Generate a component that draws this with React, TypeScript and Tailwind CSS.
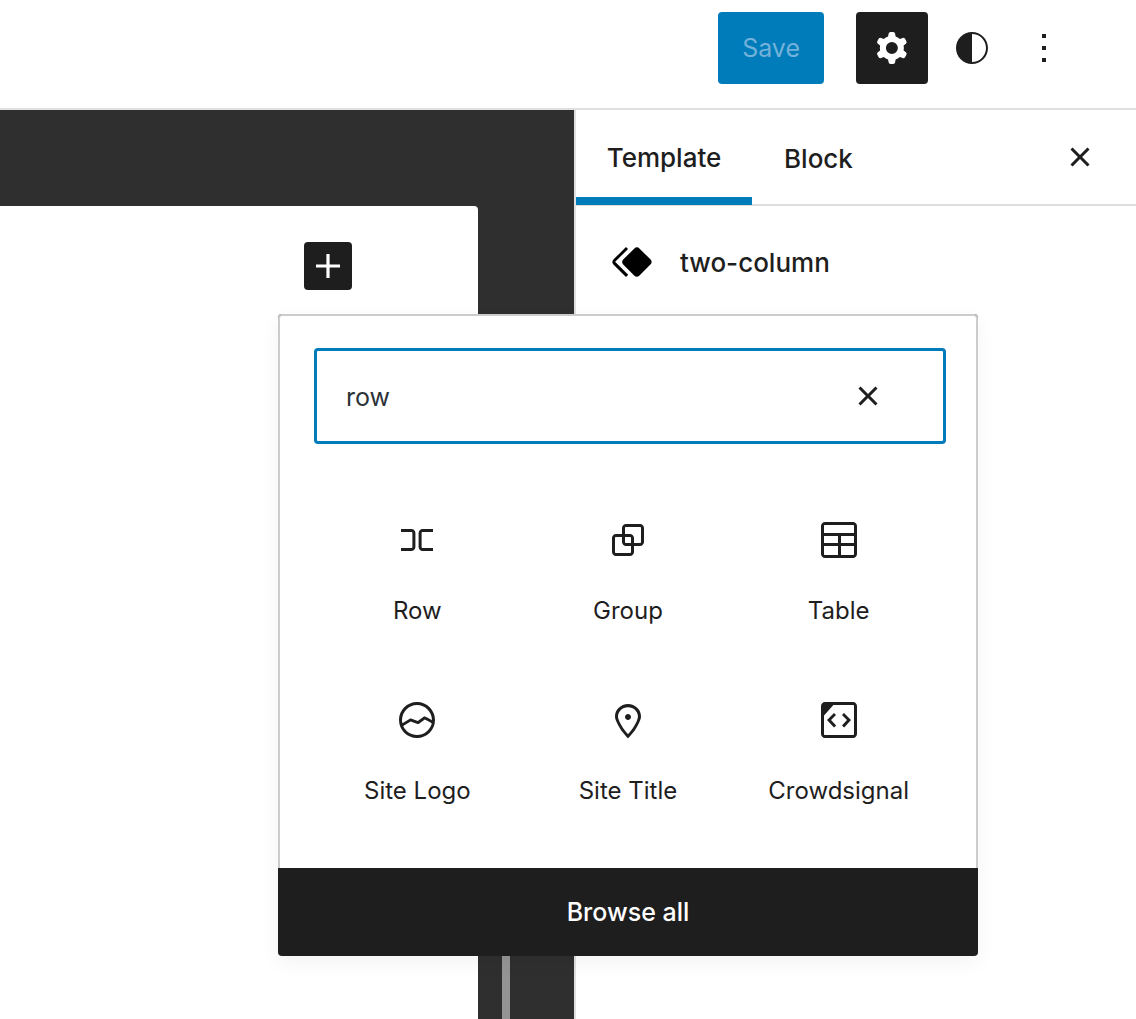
import { useState } from "react";

const icons = {
  cog: "M10.289 4.836A1 1 0 0111.275 4h1.306a1 1 0 01.987.836l.244 1.466c.787.26 1.503.679 2.108 1.218l1.393-.522a1 1 0 011.216.437l.653 1.13a1 1 0 01-.23 1.273l-1.148.944a6.025 6.025 0 010 2.435l1.149.946a1 1 0 01.23 1.272l-.653 1.13a1 1 0 01-1.216.437l-1.394-.522c-.605.54-1.32.958-2.108 1.218l-.244 1.466a1 1 0 01-.987.836h-1.306a1 1 0 01-.986-.836l-.244-1.466a5.995 5.995 0 01-2.108-1.218l-1.394.522a1 1 0 01-1.217-.436l-.653-1.131a1 1 0 01.23-1.272l1.149-.946a6.026 6.026 0 010-2.435l-1.148-.944a1 1 0 01-.23-1.272l.653-1.131a1 1 0 011.217-.437l1.393.522a5.994 5.994 0 012.108-1.218l.244-1.466zM14.929 12a3 3 0 11-6 0 3 3 0 016 0z",
  styles: "M12 4c-4.4 0-8 3.6-8 8s3.6 8 8 8 8-3.6 8-8-3.6-8-8-8zm0 15V5c3.9 0 7 3.1 7 7s-3.1 7-7 7z",
  more: "M13 19h-2v-2h2v2zm0-6h-2v-2h2v2zm0-6h-2V5h2v2z",
  close: "M12 13.06l3.712 3.713 1.061-1.06L13.061 12l3.712-3.712-1.06-1.06L12 10.938 8.288 7.227l-1.061 1.06L10.939 12l-3.712 3.712 1.06 1.061L12 13.061z",
  plus: "M18 11.2h-5.2V6h-1.6v5.2H6v1.6h5.2V18h1.6v-5.2H18z",
  symbol: "M21.3 10.8l-5.6-5.6c-.7-.7-1.8-.7-2.5 0l-5.6 5.6c-.7.7-.7 1.8 0 2.5l5.6 5.6c.3.3.8.5 1.2.5s.9-.2 1.2-.5l5.6-5.6c.8-.7.8-1.9.1-2.5zm-17.6 1L10 5.5l-1-1-6.3 6.3c-.7.7-.7 1.8 0 2.5L9 19.5l1.1-1.1-6.3-6.3c-.2 0-.2-.2-.1-.3z",
  row: "M9.2 6.5H4V8h5.2c.3 0 .5.2.5.5v7c0 .3-.2.5-.5.5H4v1.5h5.2c1.1 0 2-.9 2-2v-7c0-1.1-.8-2-2-2zM14.8 8H20V6.5h-5.2c-1.1 0-2 .9-2 2v7c0 1.1.9 2 2 2H20V16h-5.2c-.3 0-.5-.2-.5-.5v-7c-.1-.3.2-.5.5-.5z",
  group: "M18 4h-7c-1.1 0-2 .9-2 2v3H6c-1.1 0-2 .9-2 2v7c0 1.1.9 2 2 2h7c1.1 0 2-.9 2-2v-3h3c1.1 0 2-.9 2-2V6c0-1.1-.9-2-2-2zm-4.5 14c0 .3-.2.5-.5.5H6c-.3 0-.5-.2-.5-.5v-7c0-.3.2-.5.5-.5h3V13c0 1.1.9 2 2 2h2.5v3zm0-4.5H11c-.3 0-.5-.2-.5-.5v-2.5H13c.3 0 .5.2.5.5v2.5zm5-.5c0 .3-.2.5-.5.5h-3V11c0-1.1-.9-2-2-2h-2.5V6c0-.3.2-.5.5-.5h7c.3 0 .5.2.5.5v7z",
  table: "M19 3H5c-1.1 0-2 .9-2 2v14c0 1.1.9 2 2 2h14c1.1 0 2-.9 2-2V5c0-1.1-.9-2-2-2zM5 4.5h14c.3 0 .5.2.5.5v3.5h-15V5c0-.3.2-.5.5-.5zm8 5.5h6.5v3.5H13V10zm-1.5 3.5h-7V10h7v3.5zm-7 5.5v-4h7v4.5H5c-.3 0-.5-.2-.5-.5zm14.5.5h-6V15h6.5v4c0 .3-.2.5-.5.5z",
  siteLogo: "M12 3c-5 0-9 4-9 9s4 9 9 9 9-4 9-9-4-9-9-9zm0 1.5c4.1 0 7.5 3.4 7.5 7.5v.1c-1.4-.8-3.3-1.7-3.4-1.8-.2-.1-.5-.1-.8.1l-2.9 2.1L9 11.3c-.2-.1-.4 0-.6.1l-3.7 2.2c-.1-.5-.2-1-.2-1.5 0-4.2 3.4-7.6 7.5-7.6zm0 15c-3.1 0-5.8-1.9-6.9-4.5l3.7-2.2 3.5 1.2c.2.1.5 0 .7-.1l2.9-2.1c.8.4 2.5 1.2 3.5 1.9-.9 3.3-3.9 5.8-7.4 5.8z",
  marker: "M12 9c-.8 0-1.5.7-1.5 1.5S11.2 12 12 12s1.5-.7 1.5-1.5S12.8 9 12 9zm0-5c-3.6 0-6.5 2.8-6.5 6.2 0 .8.3 1.8.9 3.1.5 1.1 1.2 2.3 2 3.6.7 1 3 3.8 3.2 3.9l.4.5.4-.5c.2-.2 2.6-2.9 3.2-3.9.8-1.2 1.5-2.5 2-3.6.6-1.3.9-2.3.9-3.1C18.5 6.8 15.6 4 12 4zm4.3 8.7c-.5 1-1.1 2.2-1.9 3.4-.5.7-1.7 2.2-2.4 3-.7-.8-1.9-2.3-2.4-3-.8-1.2-1.4-2.3-1.9-3.3-.6-1.4-.7-2.2-.7-2.5 0-2.6 2.2-4.7 5-4.7s5 2.1 5 4.7c0 .2-.1 1-.7 2.4z",
  embed: "M19 3H5c-1.1 0-2 .9-2 2v14c0 1.1.9 2 2 2h14c1.1 0 2-.9 2-2V5c0-1.1-.9-2-2-2zm.5 16c0 .3-.2.5-.5.5H5c-.3 0-.5-.2-.5-.5V9.8l4.7-5.3H19c.3 0 .5.2.5.5v14zm-6-9.5L16 12l-2.5 2.8 1.1 1L18 12l-3.5-3.5-1 1zm-3 0l-1-1L6 12l3.5 3.8 1.1-1L8 12l2.5-2.5z",
};

function Icon({ name }: { name: keyof typeof icons }) {
  return (
    <svg viewBox="0 0 24 24" className="size-12 shrink-0" fill="currentColor" aria-hidden="true">
      <path fillRule="evenodd" clipRule="evenodd" d={icons[name]} />
    </svg>
  );
}

const blocks: { label: string; icon: keyof typeof icons }[] = [
  { label: "Row", icon: "row" },
  { label: "Group", icon: "group" },
  { label: "Table", icon: "table" },
  { label: "Site Logo", icon: "siteLogo" },
  { label: "Site Title", icon: "marker" },
  { label: "Crowdsignal", icon: "embed" },
];

function Inserter() {
  const [query, setQuery] = useState("row");
  return (
    <div className="absolute top-[72px] -left-[26px] z-10 w-[700px] rounded-sm bg-[#1e1e1e] shadow-[0_6px_20px_rgba(0,0,0,0.05)]">
      <div className="rounded-t-sm border-x-2 border-t-2 border-[#ccc] bg-white pt-8 pb-8">
        <div className="mr-[30px] ml-[34px] flex h-24 items-center rounded border-3 border-[#007cba] pr-[51px] pl-[29px]">
          <input
            type="text"
            aria-label="Search for a block"
            value={query}
            onChange={(e) => setQuery(e.target.value)}
            className="min-w-0 flex-1 pt-0.5 text-[25px] leading-8 text-[#2c3338] outline-none"
          />
          <button type="button" aria-label="Clear search" onClick={() => setQuery("")}>
            <Icon name="close" />
          </button>
        </div>
        <div className="mt-8 grid grid-cols-3 px-8">
          {blocks.map((b) => (
            <button key={b.label} type="button" className="flex h-[180px] flex-col items-center gap-8 pt-10">
              <Icon name={b.icon} />
              <span className="text-[24px] leading-[30px] whitespace-nowrap">{b.label}</span>
            </button>
          ))}
        </div>
      </div>
      <button type="button" className="block h-[88px] w-full rounded-b-sm pt-0.5 text-[25px] font-medium text-white">
        Browse all
      </button>
    </div>
  );
}

export default function App() {
  return (
    <div className="flex min-h-screen flex-col bg-white font-['Inter',sans-serif] text-[#1e1e1e]">
      <header className="flex items-center justify-end border-b-2 border-[#e0e0e0] pt-3 pr-14 pb-6">
        <button type="button" className="mr-8 h-[72px] rounded bg-[#007cba] px-6 pt-0.5 text-[25px] text-[#72b1d9]">
          Save
        </button>
        <button type="button" aria-label="Settings" className="mr-2 flex size-[72px] items-center justify-center rounded bg-[#1e1e1e] text-white">
          <Icon name="cog" />
        </button>
        <button type="button" aria-label="Styles" className="flex size-[72px] items-center justify-center">
          <Icon name="styles" />
        </button>
        <button type="button" aria-label="Options" className="flex size-[72px] items-center justify-center">
          <Icon name="more" />
        </button>
      </header>
      <div className="flex flex-1">
        <main className="flex min-w-0 flex-1 bg-[#2f2f2f] pt-24">
          <div className="flex flex-1 justify-end rounded-tr bg-white pt-9 pr-[126px]">
            <div className="relative size-12">
              <button type="button" aria-label="Add block" className="rounded bg-[#1e1e1e] text-white">
                <Icon name="plus" />
              </button>
              <Inserter />
            </div>
          </div>
          <div className="mt-[200px] mr-16 ml-6 w-2 bg-[#949494]" />
        </main>
        <aside className="w-[562px] shrink-0 border-l-2 border-[#e0e0e0] bg-white">
          <div className="flex h-24 items-stretch border-b-2 border-[#ddd]">
            <button type="button" className="-mb-px w-44 border-b-8 border-[#007cba] pt-2 text-[26px] font-medium">
              Template
            </button>
            <button type="button" className="px-8 pt-0.5 text-[26px] font-medium">
              Block
            </button>
            <button type="button" aria-label="Close settings" className="mr-8 ml-auto">
              <Icon name="close" />
            </button>
          </div>
          <div className="flex items-center gap-6 px-8 pt-8">
            <span className="text-black">
              <Icon name="symbol" />
            </span>
            <h2 className="pt-0.5 text-[26px] leading-8 font-medium">two-column</h2>
          </div>
        </aside>
      </div>
    </div>
  );
}
